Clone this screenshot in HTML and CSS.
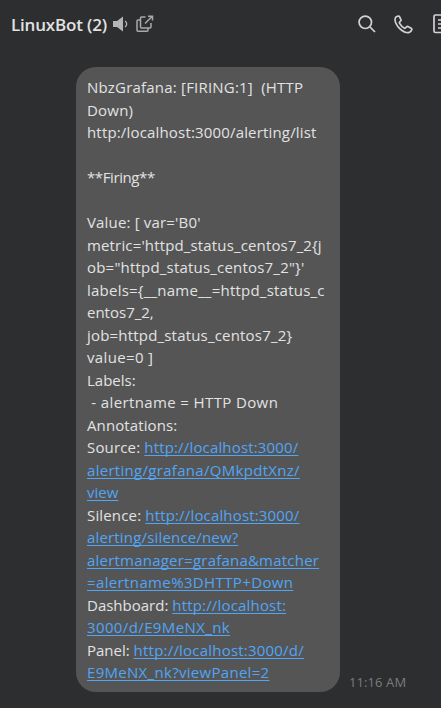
FILE: index.html
```html
<!DOCTYPE html>
<html lang="en">
<head>
<meta charset="utf-8">
<title>LinuxBot</title>
<link rel="stylesheet" href="styles.css">
</head>
<body>
<header class="topbar">
  <h1 class="title">LinuxBot (2)</h1>
  <svg class="speaker" width="15" height="16" viewBox="0 0 15 16"><path d="M0 5h4l6-4.500v15L4 11H0z" fill="#b5b5b6"/><path d="M12 5q3.500 3 0 6" fill="none" stroke="#b5b5b6" stroke-width="1.300"/></svg>
  <svg class="popout" width="18" height="18" viewBox="0 0 18 18" fill="none" stroke="#aaaaab" stroke-width="1.500"><path d="M9.500 2H5.500Q4.500 2 4.500 3V12Q4.500 13 5.500 13H14Q15 13 15 12V8"/><path d="M4.500 5H2Q1 5 1 6V15Q1 16.300 2 16.300H11Q12 16.300 12 15V13M9 8.500L16 1.500M12 1.200H16.500V5.500"/></svg>
  <nav class="actions">
    <svg width="18" height="18" viewBox="0 0 18 18" fill="none" stroke="#d2d2d3" stroke-width="1.700"><circle cx="7.300" cy="7.300" r="6.200"/><path d="M12 12l5 5"/></svg>
    <svg width="19" height="19" viewBox="0 0 19 19" fill="none" stroke="#d2d2d3" stroke-width="1.700" stroke-linejoin="round"><path d="M2.300 1.800L4.300 1Q5.100.9 5.500 1.700L7 4.800Q7.200 5.500 6.700 6L5.500 7.200Q5.200 7.700 5.600 8.400Q7.500 11.600 10.200 13.100Q10.900 13.500 11.400 13L12.700 11.700Q13.200 11.300 13.900 11.600L17.200 13.300Q18.100 13.800 17.800 14.600Q16.900 17.400 14.500 17.700Q10 17.900 5.500 13.300Q1.200 9 1 4.500Q1 2.600 2.300 1.800Z"/></svg>
    <svg class="notes" width="18" height="20" viewBox="0 0 18 20" fill="none" stroke="#d2d2d3" stroke-width="1.700"><rect x="1" y="1" width="16" height="17.500" rx="1.500"/><path d="M5 6h8M5 10h8M5 14h8" stroke-width="1.400"/></svg>
  </nav>
</header>
<main class="message">
  <div class="bubble">
    <p class="l1">NbzGrafana: [FIRING:1]&nbsp; (HTTP</p>
    <p class="l2">Down)</p>
    <p class="l3">http:/localhost:3000/alerting/list</p>
    <p>&nbsp;</p>
    <p class="l5">**Firing**</p>
    <p>&nbsp;</p>
    <p class="l7">Value: [ var='B0'</p>
    <p class="l8">metric='httpd_status_centos7_2{j</p>
    <p class="l9">ob="httpd_status_centos7_2"}'</p>
    <p class="l10">labels={__name__=httpd_status_c</p>
    <p>entos7_2,</p>
    <p class="l12">job=httpd_status_centos7_2}</p>
    <p class="l13">value=0 ]</p>
    <p>Labels:</p>
    <p class="l15">&nbsp;- alertname = HTTP Down</p>
    <p class="l16">Annotations:</p>
    <p class="l17">Source: <a>http://localhost:3000/</a></p>
    <p class="l18"><a>alerting/grafana/QMkpdtXnz/</a></p>
    <p><a>view</a></p>
    <p class="l20">Silence: <a>http://localhost:3000/</a></p>
    <p class="l21"><a>alerting/silence/new?</a></p>
    <p class="l22"><a>alertmanager=grafana&amp;matcher</a></p>
    <p class="l23"><a>=alertname%3DHTTP+Down</a></p>
    <p class="l24">Dashboard: <a>http://localhost:</a></p>
    <p class="l25"><a>3000/d/E9MeNX_nk</a></p>
    <p class="l26">Panel: <a>http://localhost:3000/d/</a></p>
    <p class="l27"><a>E9MeNX_nk?viewPanel=2</a></p>
  </div>
  <time class="time">11:16 AM</time>
</main>
</body>
</html>
```
FILE: styles.css
```css
* { box-sizing: border-box; margin: 0; padding: 0; }
body { height: 708px; overflow: hidden; background: #2d2e30; color: #e2e2e2; font-family: "Open Sans", "Noto Sans", sans-serif; }
.topbar { display: flex; align-items: center; height: 48px; padding-left: 11px; }
.title { width: 102px; flex: none; font-size: 17px; font-weight: 600; letter-spacing: -0.18px; white-space: nowrap; color: #e2e2e2; }
.speaker { flex: none; }
.popout { flex: none; margin-left: 8px; }
.actions { display: flex; align-items: center; gap: 18px; margin-left: 204px; flex: none; }
.actions svg { flex: none; }
.notes { margin-left: 2px; }
.message { display: flex; align-items: flex-end; padding: 19px 0 0 76px; }
.bubble { width: 264px; height: 625px; flex: none; padding: 9px 0 0 11px; border-radius: 20px; background: #555; font-size: 15px; line-height: 22.5px; }
.bubble p { white-space: pre; }
.bubble a { color: #50a5f5; text-decoration: underline; text-decoration-thickness: 1px; text-underline-offset: 2px; text-decoration-skip-ink: none; }
.time { margin-left: 9px; font-size: 13px; line-height: 20px; letter-spacing: 0.1px; color: #7b7c7d; white-space: nowrap; }

/* Per-line tracking */
.l1 { letter-spacing: 0.2px; }
.l2 { letter-spacing: 0.2px; }
.l3 { letter-spacing: 0.17px; }
.l5 { letter-spacing: -0.4px; }
.l7 { letter-spacing: 0.17px; }
.l8 { letter-spacing: 0.15px; }
.l9 { letter-spacing: 0.2px; }
.l10 { letter-spacing: 0.23px; }
.l12 { letter-spacing: 0.19px; }
.l13 { letter-spacing: 0.35px; }
.l15 { letter-spacing: 0.38px; }
.l16 { letter-spacing: 0.1px; }
.l17 { letter-spacing: 0.16px; }
.l18 { letter-spacing: 0.3px; }
.l20 { letter-spacing: 0.16px; }
.l21 { letter-spacing: 0.17px; }
.l22 { letter-spacing: 0.22px; }
.l23 { letter-spacing: 0.37px; }
.l24 a { letter-spacing: 0.18px; }
.l25 { letter-spacing: 0.38px; }
.l26 a { letter-spacing: 0.21px; }
.l27 { letter-spacing: 0.3px; }
```
